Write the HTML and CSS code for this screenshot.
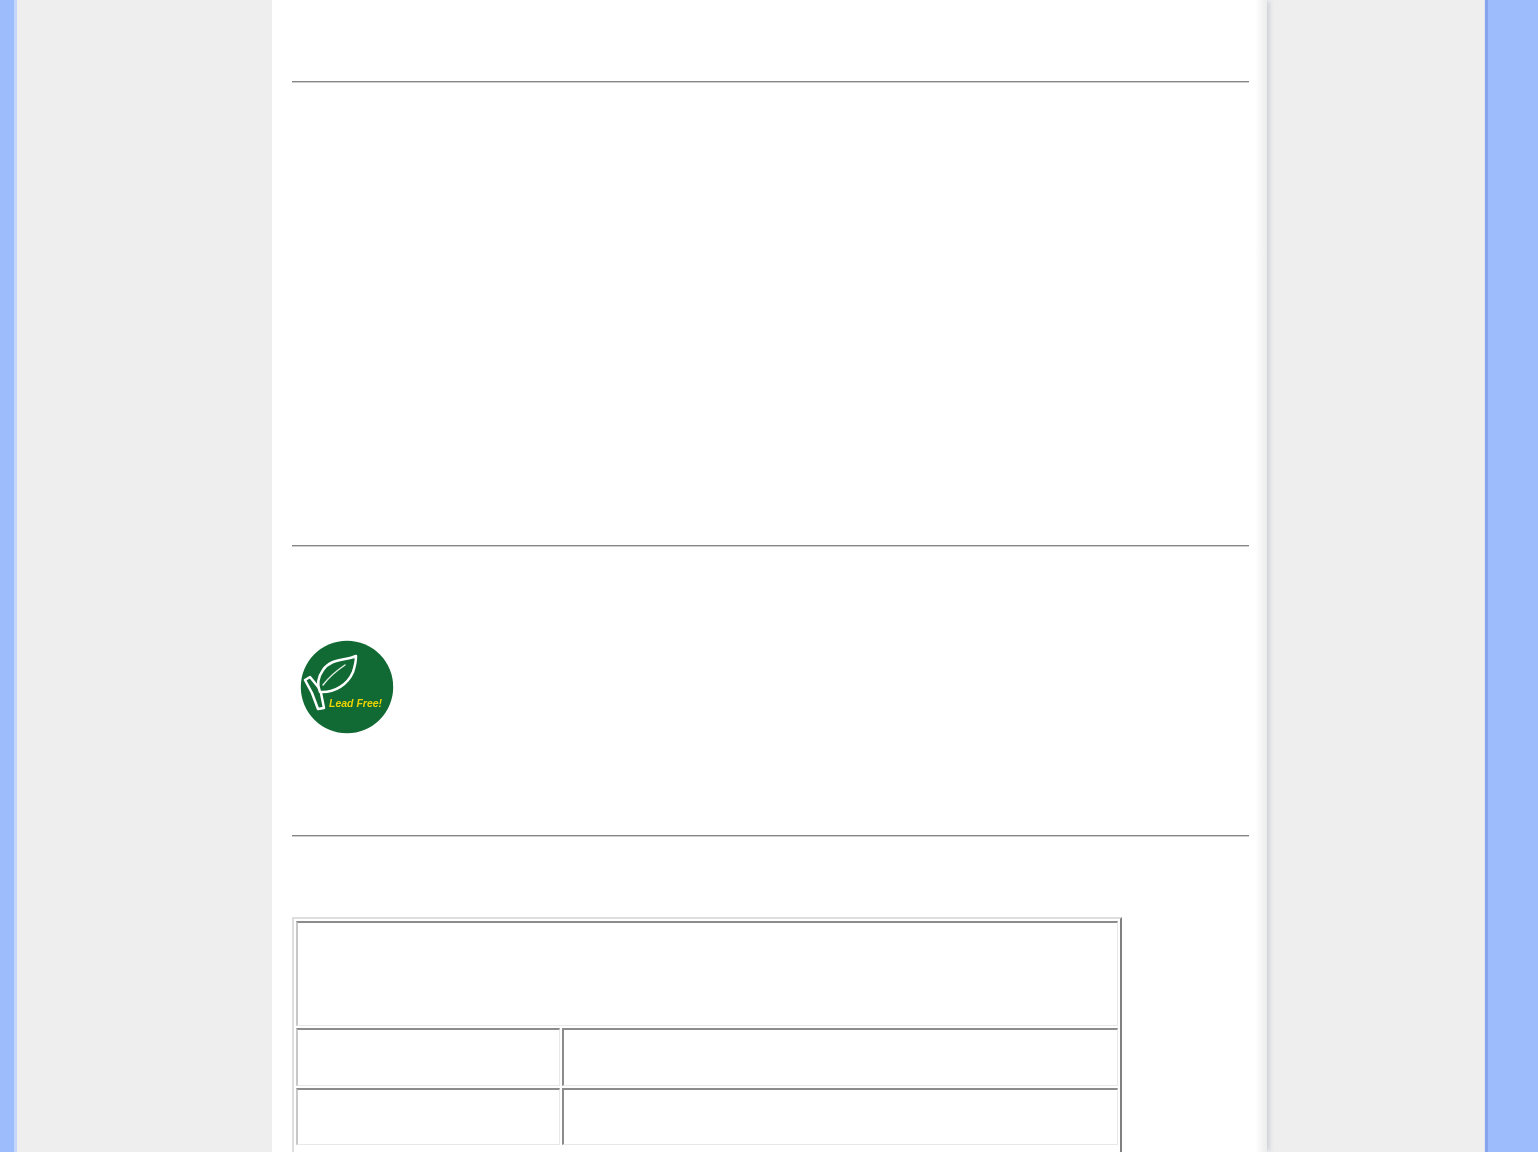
FILE: index.html
```html
<!DOCTYPE html>
<html lang="en">
<head>
    <meta charset="UTF-8">
    <meta name="viewport" content="width=device-width, initial-scale=1.0">
    <title>Lead Free</title>
    <link rel="stylesheet" href="styles.css">
</head>
<body>
    <div class="frame">
        <div class="edge edge-left"></div>
        <div class="backdrop">
            <div class="page">
                <div class="section section-top"></div>
                <hr>
                <div class="section section-blank"></div>
                <hr>
                <div class="section section-logo">
                    <svg class="logo" width="94" height="94" viewBox="0 0 94 94" role="img" aria-label="Lead Free">
                        <circle cx="47" cy="47" r="46.2" fill="#116a33"/>
                        <path d="M56 16C45 21 31 18 23 30C18 37 17 45 20 52C35 53 48 44 53 32C55 26 56 21 56 16Z" fill="none" stroke="#fff" stroke-width="2.5" stroke-linejoin="round"/>
                        <path d="M45 25C36 31 29 37 23 45" fill="none" stroke="#dfeee3" stroke-width="1.5" stroke-linecap="round"/>
                        <path d="M19 48L10 37L5 40L12 53L18 69L24 68L21 53" fill="none" stroke="#fff" stroke-width="2.5" stroke-linejoin="round"/>
                        <text class="logo-text" x="29" y="67">Lead Free!</text>
                    </svg>
                </div>
                <hr>
                <div class="section section-table">
                    <table class="spec">
                        <colgroup>
                            <col class="col-a">
                            <col>
                        </colgroup>
                        <tr class="row-head"><td class="cell-first" colspan="2"></td></tr>
                        <tr class="row-mid"><td class="cell-first"></td><td></td></tr>
                        <tr class="row-low"><td class="cell-first"></td><td></td></tr>
                        <tr class="row-rest"><td colspan="2"></td></tr>
                    </table>
                </div>
            </div>
        </div>
        <div class="edge edge-right"></div>
    </div>
</body>
</html>
```

FILE: styles.css
```css
* {
    margin: 0;
    padding: 0;
    box-sizing: border-box;
}

html, body {
    height: 100%;
    overflow: hidden;
    background-color: #fff;
    font-family: "Liberation Sans", Arial, sans-serif;
}

.frame {
    display: flex;
    height: 1152px;
}

.edge {
    flex: none;
    background-color: #9cbcfb;
}

.edge-left {
    width: 17px;
    border-right: 3px solid #c4d6fb;
}

.edge-right {
    width: 53px;
    border-left: 3px solid #86a5ec;
}

.backdrop {
    flex: 1;
    background-color: #eee;
    padding-left: 255px;
    border-right: 1px solid #dfe4f2;
}

.page {
    width: 995px;
    height: 1152px;
    padding: 0 18px 0 20px;
    background: linear-gradient(to right, #fff calc(100% - 12px), #ececec);
    box-shadow: 4px 0 4px -1px #d2d4da;
    overflow: hidden;
}

hr {
    height: 2px;
    border: none;
    border-top: 1px solid #858585;
    border-bottom: 1px solid #cfcfcf;
}

.section-top {
    height: 81px;
}

.section-blank {
    height: 462px;
}

.section-logo {
    height: 288px;
    padding: 93px 0 0 8px;
}

.logo {
    display: block;
    filter: blur(0.4px);
}

.logo-text {
    font-size: 10.5px;
    font-weight: bold;
    font-style: italic;
    fill: #ecd400;
}

.section-table {
    padding-top: 80px;
}

.spec {
    width: 830px;
    height: 300px;
    border-collapse: separate;
    border-spacing: 2px;
    border: 2px solid;
    border-color: #dedede #808080 #808080 #dedede;
    table-layout: fixed;
}

.spec td {
    border-style: solid;
    border-width: 2px 1px 1px 2px;
    border-color: #8c8c8c #e8e8e8 #e8e8e8 #8c8c8c;
}

.spec .cell-first {
    border-left-color: #c8c8c8;
}

.col-a {
    width: 264px;
}

.row-head td {
    height: 105px;
}

.row-mid td {
    height: 58px;
}

.row-low td {
    height: 57px;
}

.spec .row-rest td {
    border: none;
}
```
